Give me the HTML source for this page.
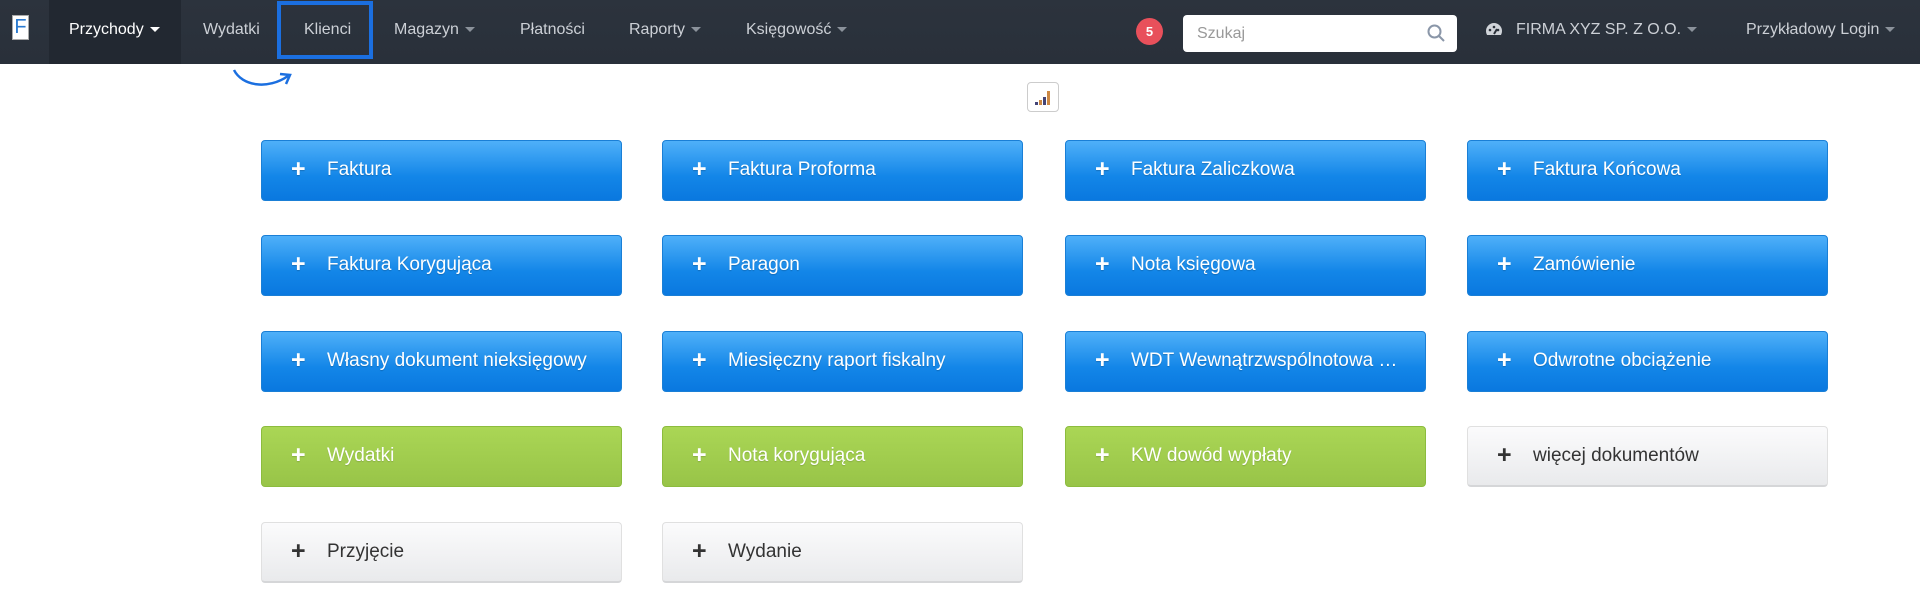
<!DOCTYPE html>
<html><head><meta charset="utf-8"><style>
*{margin:0;padding:0;box-sizing:border-box}
body{width:1920px;height:594px;background:#fff;font-family:"Liberation Sans",sans-serif;position:relative;overflow:hidden}
.nav{position:absolute;left:0;top:0;width:1920px;height:64px;background:linear-gradient(#2c333d,#29303a)}
.ni{position:absolute;top:0;height:64px;line-height:60px;color:#ccd0d6;font-size:16px;white-space:nowrap}
.car{display:inline-block;width:0;height:0;border-left:5px solid transparent;border-right:5px solid transparent;border-top:5px solid #8b929b;vertical-align:middle;margin-left:6px}
.btn{position:absolute;width:361px;height:61px;border-radius:4px;font-size:19px;line-height:57px;padding-left:65px;color:#fff;white-space:nowrap}
.btn b{position:absolute;left:29px;top:0;font-size:25px;font-weight:bold}
.blue{background:linear-gradient(#4fb0f9,#1386e8 60%,#0a78df);border:1px solid #1a7fd6;text-shadow:0 1px 1px rgba(0,0,0,.2)}
.green{background:linear-gradient(#aad655,#98c448);border:1px solid #8cbc3e;text-shadow:0 1px 1px rgba(0,0,0,.15)}
.grey{background:linear-gradient(#fbfbfc,#e9eaec);border:1px solid #e0e0e0;border-bottom:2px solid #d5d6d8;color:#333}
.grey b{color:#333}
</style></head><body>
<div class="nav">
 <div style="position:absolute;left:12px;top:15px;width:17px;height:25px;background:#fff;border:1px solid #aaa;color:#2a7ad0;font-size:20px;line-height:23px;text-align:center">F</div>
 <div style="position:absolute;left:49px;top:0;width:132px;height:64px;background:#222831"></div>
 <div class="ni" style="left:69px;color:#fff">Przychody<span class="car" style="border-top-color:#fff"></span></div>
 <div class="ni" style="left:203px">Wydatki</div>
 <div style="position:absolute;left:277px;top:1px;width:96px;height:58px;border:4px solid #1b6fe0"></div>
 <div class="ni" style="left:304px">Klienci</div>
 <div class="ni" style="left:394px">Magazyn<span class="car"></span></div>
 <div class="ni" style="left:520px">Płatności</div>
 <div class="ni" style="left:629px">Raporty<span class="car"></span></div>
 <div class="ni" style="left:746px">Księgowość<span class="car"></span></div>
 <div style="position:absolute;left:1136px;top:18px;width:27px;height:27px;border-radius:50%;background:#e8505b;color:#fff;font-size:13px;font-weight:bold;text-align:center;line-height:27px">5</div>
 <div style="position:absolute;left:1183px;top:15px;width:274px;height:37px;background:#fff;border-radius:4px;color:#999;font-size:16px;line-height:37px;padding-left:14px">Szukaj
  <svg style="position:absolute;right:12px;top:9px" width="18" height="18" viewBox="0 0 18 18"><circle cx="7.5" cy="7.5" r="6" fill="none" stroke="#8a96a8" stroke-width="2"/><path d="M12 12l5 5" stroke="#8a96a8" stroke-width="2"/></svg></div>
 <svg style="position:absolute;left:1485px;top:22px" width="18" height="16" viewBox="0 0 18 16"><circle cx="9" cy="9" r="8" fill="#d0d4d9"/><rect x="0" y="13" width="18" height="3" fill="#2b323c"/><circle cx="5" cy="8" r="1.3" fill="#2a3039"/><circle cx="9" cy="5" r="1.3" fill="#2a3039"/><circle cx="13" cy="8" r="1.3" fill="#2a3039"/><path d="M9 12L12 7" stroke="#2a3039" stroke-width="2"/></svg>
 <div class="ni" style="left:1516px">FIRMA XYZ SP. Z O.O.<span class="car"></span></div>
 <div class="ni" style="left:1746px">Przykładowy Login<span class="car"></span></div>
</div>
<svg style="position:absolute;left:228px;top:66px" width="72" height="28" viewBox="0 0 72 28"><path d="M6 4C14 20 40 24 60 10" fill="none" stroke="#1b6fe0" stroke-width="2.5"/><path d="M52 8L62 9L58 18" fill="none" stroke="#1b6fe0" stroke-width="2.5"/></svg>
<div style="position:absolute;left:1027px;top:82px;width:32px;height:30px;border:1px solid #ccc;border-radius:4px">
 <svg style="position:absolute;left:7px;top:6px" width="18" height="16"><rect x="0" y="13" width="3" height="3" fill="#447"/><rect x="4" y="11" width="3" height="5" fill="#c84"/><rect x="8" y="8" width="3" height="8" fill="#447"/><rect x="12" y="2" width="3" height="14" fill="#c84"/></svg></div>

<div class="btn blue" style="left:261px;top:140px"><b>+</b>Faktura</div>
<div class="btn blue" style="left:662px;top:140px"><b>+</b>Faktura Proforma</div>
<div class="btn blue" style="left:1065px;top:140px"><b>+</b>Faktura Zaliczkowa</div>
<div class="btn blue" style="left:1467px;top:140px"><b>+</b>Faktura Końcowa</div>

<div class="btn blue" style="left:261px;top:235px"><b>+</b>Faktura Korygująca</div>
<div class="btn blue" style="left:662px;top:235px"><b>+</b>Paragon</div>
<div class="btn blue" style="left:1065px;top:235px"><b>+</b>Nota księgowa</div>
<div class="btn blue" style="left:1467px;top:235px"><b>+</b>Zamówienie</div>

<div class="btn blue" style="left:261px;top:331px"><b>+</b>Własny dokument nieksięgowy</div>
<div class="btn blue" style="left:662px;top:331px"><b>+</b>Miesięczny raport fiskalny</div>
<div class="btn blue" style="left:1065px;top:331px"><b>+</b>WDT Wewnątrzwspólnotowa …</div>
<div class="btn blue" style="left:1467px;top:331px"><b>+</b>Odwrotne obciążenie</div>

<div class="btn green" style="left:261px;top:426px"><b>+</b>Wydatki</div>
<div class="btn green" style="left:662px;top:426px"><b>+</b>Nota korygująca</div>
<div class="btn green" style="left:1065px;top:426px"><b>+</b>KW dowód wypłaty</div>
<div class="btn grey" style="left:1467px;top:426px"><b>+</b>więcej dokumentów</div>

<div class="btn grey" style="left:261px;top:522px"><b>+</b>Przyjęcie</div>
<div class="btn grey" style="left:662px;top:522px"><b>+</b>Wydanie</div>
</body></html>
